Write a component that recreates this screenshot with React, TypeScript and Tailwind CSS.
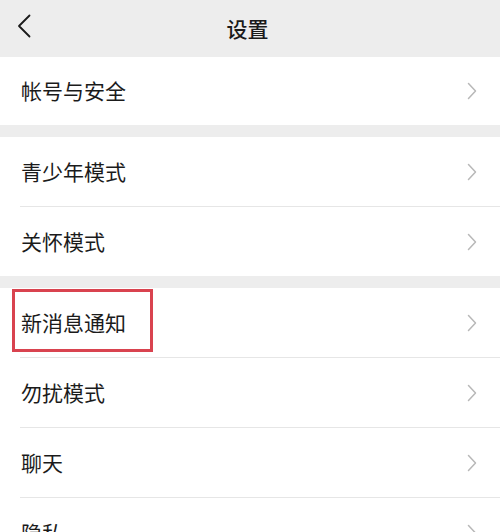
import React from "react";

const Chevron = () => (
  <svg width="10" height="18" viewBox="0 0 10 18" fill="none">
    <path d="M1.5 1.5 L8.5 9 L1.5 16.5" stroke="#b8b8b8" strokeWidth="1.5" strokeLinecap="round" strokeLinejoin="round" />
  </svg>
);

const Row = ({ label, divider, highlight }: { label: string; divider?: boolean; highlight?: boolean }) => (
  <div className="relative">
    <div className="flex h-[69px] items-center justify-between pl-[21px] pr-[23px]">
      <span className="text-[21px] text-[#1b1b1b]">{label}</span>
      <Chevron />
    </div>
    {highlight && (
      <div className="absolute left-[12px] top-[1px] h-[63px] w-[141px] border-[3px] border-[#d9434f]" />
    )}
    {divider && <div className="ml-[20px] h-px bg-[#e6e6e6]" />}
  </div>
);

export default function App() {
  return (
    <div
      className="h-[532px] w-[500px] overflow-hidden bg-[#ededed]"
      style={{ fontFamily: '"Noto Sans CJK SC", "Noto Sans", sans-serif' }}
    >
      <div className="relative flex h-[57px] items-center justify-center pr-[5px]">
        <div className="absolute left-[17px] top-[14px]">
          <svg width="15" height="24" viewBox="0 0 15 24" fill="none">
            <path d="M12.5 1.5 L2 12 L12.5 22.5" stroke="#1a1a1a" strokeWidth="1.8" strokeLinecap="round" strokeLinejoin="round" />
          </svg>
        </div>
        <span className="text-[21px] font-medium text-[#1a1a1a]">设置</span>
      </div>

      <div className="bg-white">
        <div className="flex h-[68px] items-center justify-between pl-[21px] pr-[23px]">
          <span className="text-[21px] text-[#1b1b1b]">帐号与安全</span>
          <Chevron />
        </div>
      </div>

      <div className="mt-[12px] bg-white">
        <Row label="青少年模式" divider />
        <Row label="关怀模式" />
      </div>

      <div className="mt-[12px] bg-white">
        <Row label="新消息通知" divider highlight />
        <Row label="勿扰模式" divider />
        <Row label="聊天" divider />
        <Row label="隐私" />
      </div>
    </div>
  );
}
